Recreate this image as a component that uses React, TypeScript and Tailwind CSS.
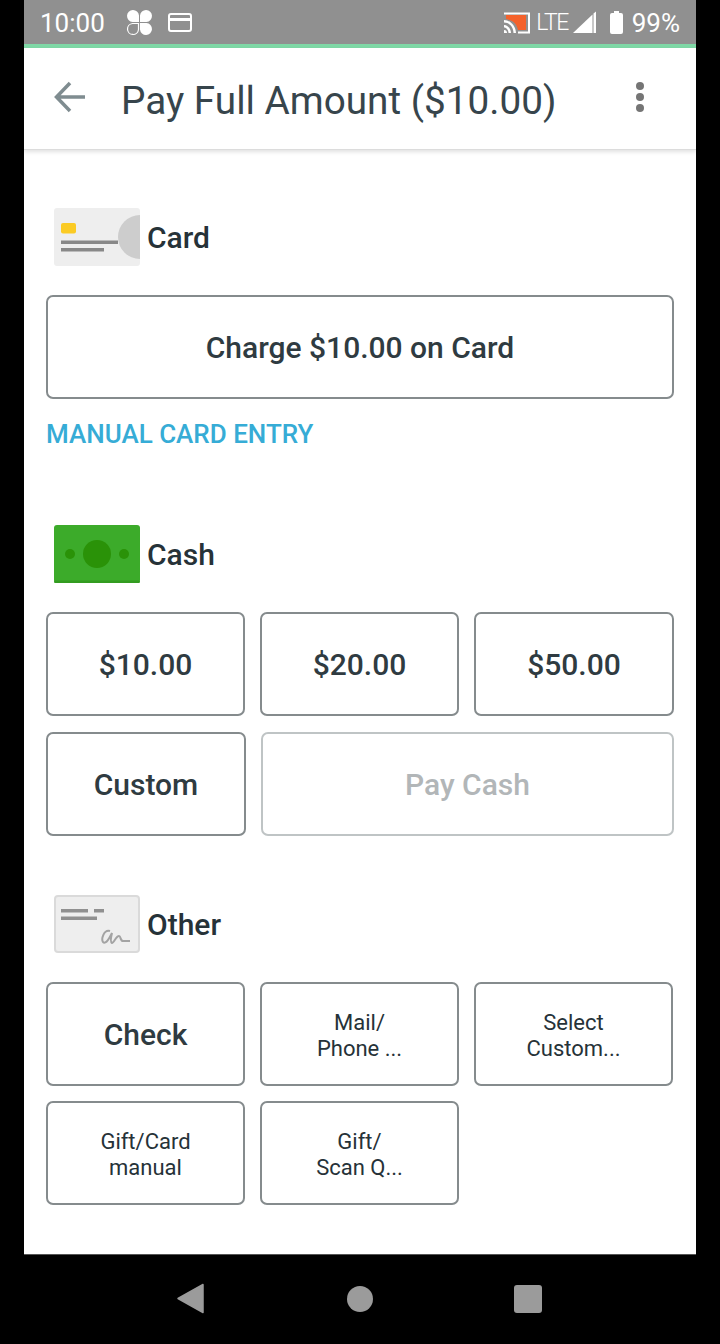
import { ReactNode } from 'react';

function PayButton({ children, className = '' }: { children: ReactNode; className?: string }) {
    return (
        <button
            type="button"
            className={`flex h-[104px] items-center justify-center rounded-[7px] border-2 border-[#858b8d] text-center font-medium text-[#2f3b41] ${className}`}
        >
            {children}
        </button>
    );
}

function SmallLabel({ lines }: { lines: string[] }) {
    return (
        <span className="pt-[3px] text-[22px] font-normal leading-[26px] text-[#263238]">
            {lines.map((line) => (
                <span key={line} className="block">
                    {line}
                </span>
            ))}
        </span>
    );
}

function SectionHeader({ label, icon }: { label: string; icon: ReactNode }) {
    return (
        <div className="flex h-[60px] items-center pl-[30px]">
            {icon}
            <span className="ml-[7px] text-[30px] font-medium text-[#263238]">{label}</span>
        </div>
    );
}

function CardIcon() {
    return (
        <svg width="86" height="58" viewBox="0 0 86 58">
            <rect width="86" height="58" rx="3" fill="#eeeeee" />
            <path d="M86 7 A22 22 0 0 0 86 51 Z" fill="#cdcdcd" />
            <rect x="7" y="15" width="15" height="10.500" rx="2" fill="#fbcb24" />
            <rect x="7" y="32.500" width="57" height="3.500" fill="#888888" />
            <rect x="7" y="40" width="43" height="3.500" fill="#888888" />
        </svg>
    );
}

function CashIcon() {
    return (
        <svg width="86" height="58" viewBox="0 0 86 58">
            <rect width="86" height="58" rx="3" fill="#3cab2a" />
            <rect y="55.500" width="86" height="2.500" rx="1.250" fill="#339c20" />
            <circle cx="43" cy="29" r="14" fill="#2a9208" />
            <circle cx="16" cy="29" r="5" fill="#2a9208" />
            <circle cx="70" cy="29" r="5" fill="#2a9208" />
        </svg>
    );
}

function CheckIcon() {
    return (
        <svg width="86" height="58" viewBox="0 0 86 58">
            <rect x="1" y="1" width="84" height="56" rx="3" fill="#eeeeee" stroke="#dadada" strokeWidth="2" />
            <rect x="7" y="14" width="27" height="3.500" fill="#909090" />
            <rect x="40" y="14" width="10" height="3.500" fill="#909090" />
            <rect x="7" y="21.500" width="36" height="3.500" fill="#909090" />
            <path
                d="M56 36 C50 34 47 44 49 47 C52 50 56 42 58 38 C57 42 56 47 58 48 C60 48 62 41 65 41 C67 41 66 46 69 46 L76 46"
                fill="none"
                stroke="#a3a3a3"
                strokeWidth="2"
            />
        </svg>
    );
}

function StatusBar() {
    return (
        <div className="flex h-[44px] items-center justify-between bg-[#909090] pl-[16px] pr-[16px] pt-[1px] text-white">
            <div className="flex items-center">
                <span className="text-[26px] leading-none">10:00</span>
                <svg className="ml-[21px]" width="27" height="27" viewBox="0 0 27 27">
                    <path d="M13 13H6.500A6 6 0 1 1 13 6.500Z" fill="#fff" />
                    <path d="M14 13h6.500A6 6 0 1 0 14 6.500Z" fill="#fff" />
                    <path d="M14 14h6.500A6 6 0 1 1 14 20.500Z" fill="#fff" />
                    <path d="M12.500 14.500H6.500A5.500 5.500 0 1 0 12.500 20.500Z" fill="none" stroke="#fff" strokeWidth="1.200" />
                </svg>
                <svg className="ml-[15px]" width="24" height="20" viewBox="0 0 24 20">
                    <rect x="1" y="1" width="22" height="17" rx="2" fill="none" stroke="#fff" strokeWidth="2" />
                    <rect x="1" y="5" width="22" height="3" fill="#fff" />
                </svg>
            </div>
            <div className="flex items-center">
                <svg width="27" height="22" viewBox="0 0 27 22">
                    <path d="M1 1.500h25v19h-11" fill="none" stroke="#fff" strokeWidth="2" />
                    <path d="M3 3h20v15h-8C14 12 10 8 3 7Z" fill="#f4622c" />
                    <path d="M1 8c6 0 12 6 12 13h-2.500c0-6-4-10.500-9.500-10.500ZM1 13c4 0 7 4 7 8H5.500c0-3-2-5.500-4.500-5.500ZM1 18a3 3 0 0 1 3 3H1Z" fill="#fff" />
                </svg>
                <span className="ml-[6px] text-[23px] font-light leading-none tracking-[-1.500px]">LTE</span>
                <svg className="ml-[5px]" width="24" height="23" viewBox="0 0 24 23">
                    <path d="M0 22 19.500 3.500V22Z" fill="#fff" />
                    <path d="M20.500 2.500 23 0.500V22h-2.500Z" fill="#fff" />
                </svg>
                <svg className="ml-[13px]" width="13" height="23" viewBox="0 0 13 23">
                    <path d="M4 0h5v2h2a2 2 0 0 1 2 2v17a2 2 0 0 1-2 2H2a2 2 0 0 1-2-2V4a2 2 0 0 1 2-2h2Z" fill="#fff" />
                </svg>
                <span className="ml-[9px] text-[26px] leading-none">99%</span>
            </div>
        </div>
    );
}

function Toolbar() {
    return (
        <div className="relative flex h-[102px] items-center border-b border-[#dcdcdc] bg-white shadow-[0_2px_4px_rgba(0,0,0,0.12)]">
            <svg className="ml-[30px] mb-[3px]" width="32" height="32" viewBox="0 0 32 32">
                <path d="M31 16H3M16 2 2.500 16 16 30" fill="none" stroke="#7f8c90" strokeWidth="3.500" />
            </svg>
            <span className="ml-[35px] pt-[5px] text-[38.700px] leading-none text-[#37454c]">Pay Full Amount ($10.00)</span>
            <div className="ml-auto mr-[52px] mb-[4px] flex flex-col gap-[3px]">
                <span className="h-[8px] w-[8px] rounded-full bg-[#757575]" />
                <span className="h-[8px] w-[8px] rounded-full bg-[#757575]" />
                <span className="h-[8px] w-[8px] rounded-full bg-[#757575]" />
            </div>
        </div>
    );
}

function NavBar() {
    return (
        <div className="flex h-[89px] items-center bg-black pb-[2px] pl-[177px]">
            <svg width="27" height="31" viewBox="0 0 27 31">
                <path d="M26 1.500v28L1 15.500Z" fill="#9b9b9b" stroke="#9b9b9b" strokeWidth="1.500" strokeLinejoin="round" />
            </svg>
            <span className="ml-[143px] h-[26px] w-[26px] rounded-full bg-[#9b9b9b]" />
            <span className="ml-[141px] h-[28px] w-[28px] rounded-[3px] bg-[#9b9b9b]" />
        </div>
    );
}

export default function App() {
    return (
        <div className="flex h-[1344px] w-[720px] flex-col bg-black [font-family:Roboto,sans-serif]">
            <div className="mx-[24px] flex h-[1255px] flex-col border-b border-[#555] bg-white">
                <StatusBar />
                <div className="h-[4px] bg-[#7fd8a6]" />
                <Toolbar />
                <div className="flex flex-col px-[22px] pt-[57px]">
                    <div className="-ml-[22px] -mr-[22px]">
                        <SectionHeader label="Card" icon={<CardIcon />} />
                    </div>
                    <PayButton className="mt-[28px] w-[628px] text-[30px]">Charge $10.00 on Card</PayButton>
                    <span className="mt-[20px] text-[26px] font-medium leading-[30px] text-[#36acd6]">MANUAL CARD ENTRY</span>

                    <div className="-ml-[22px] -mr-[22px] mt-[75px]">
                        <SectionHeader label="Cash" icon={<CashIcon />} />
                    </div>
                    <div className="mt-[28px] flex gap-[15px]">
                        <PayButton className="w-[199px] text-[30px]">$10.00</PayButton>
                        <PayButton className="w-[199px] text-[30px]">$20.00</PayButton>
                        <PayButton className="w-[200px] text-[30px]">$50.00</PayButton>
                    </div>
                    <div className="mt-[16px] flex gap-[15px]">
                        <PayButton className="w-[200px] text-[30px]">Custom</PayButton>
                        <PayButton className="w-[413px] border-[#bfc4c5] text-[30px] !text-[#b2b6b8]">Pay Cash</PayButton>
                    </div>

                    <div className="-ml-[22px] -mr-[22px] mt-[58px]">
                        <SectionHeader label="Other" icon={<CheckIcon />} />
                    </div>
                    <div className="mt-[28px] flex gap-[15px]">
                        <PayButton className="w-[199px] text-[30px]">Check</PayButton>
                        <PayButton className="w-[199px]"><SmallLabel lines={['Mail/', 'Phone ...']} /></PayButton>
                        <PayButton className="w-[199px]"><SmallLabel lines={['Select', 'Custom...']} /></PayButton>
                    </div>
                    <div className="mt-[15px] flex gap-[15px]">
                        <PayButton className="w-[199px]"><SmallLabel lines={['Gift/Card', 'manual']} /></PayButton>
                        <PayButton className="w-[199px]"><SmallLabel lines={['Gift/', 'Scan Q...']} /></PayButton>
                    </div>
                </div>
            </div>
            <NavBar />
        </div>
    );
}
